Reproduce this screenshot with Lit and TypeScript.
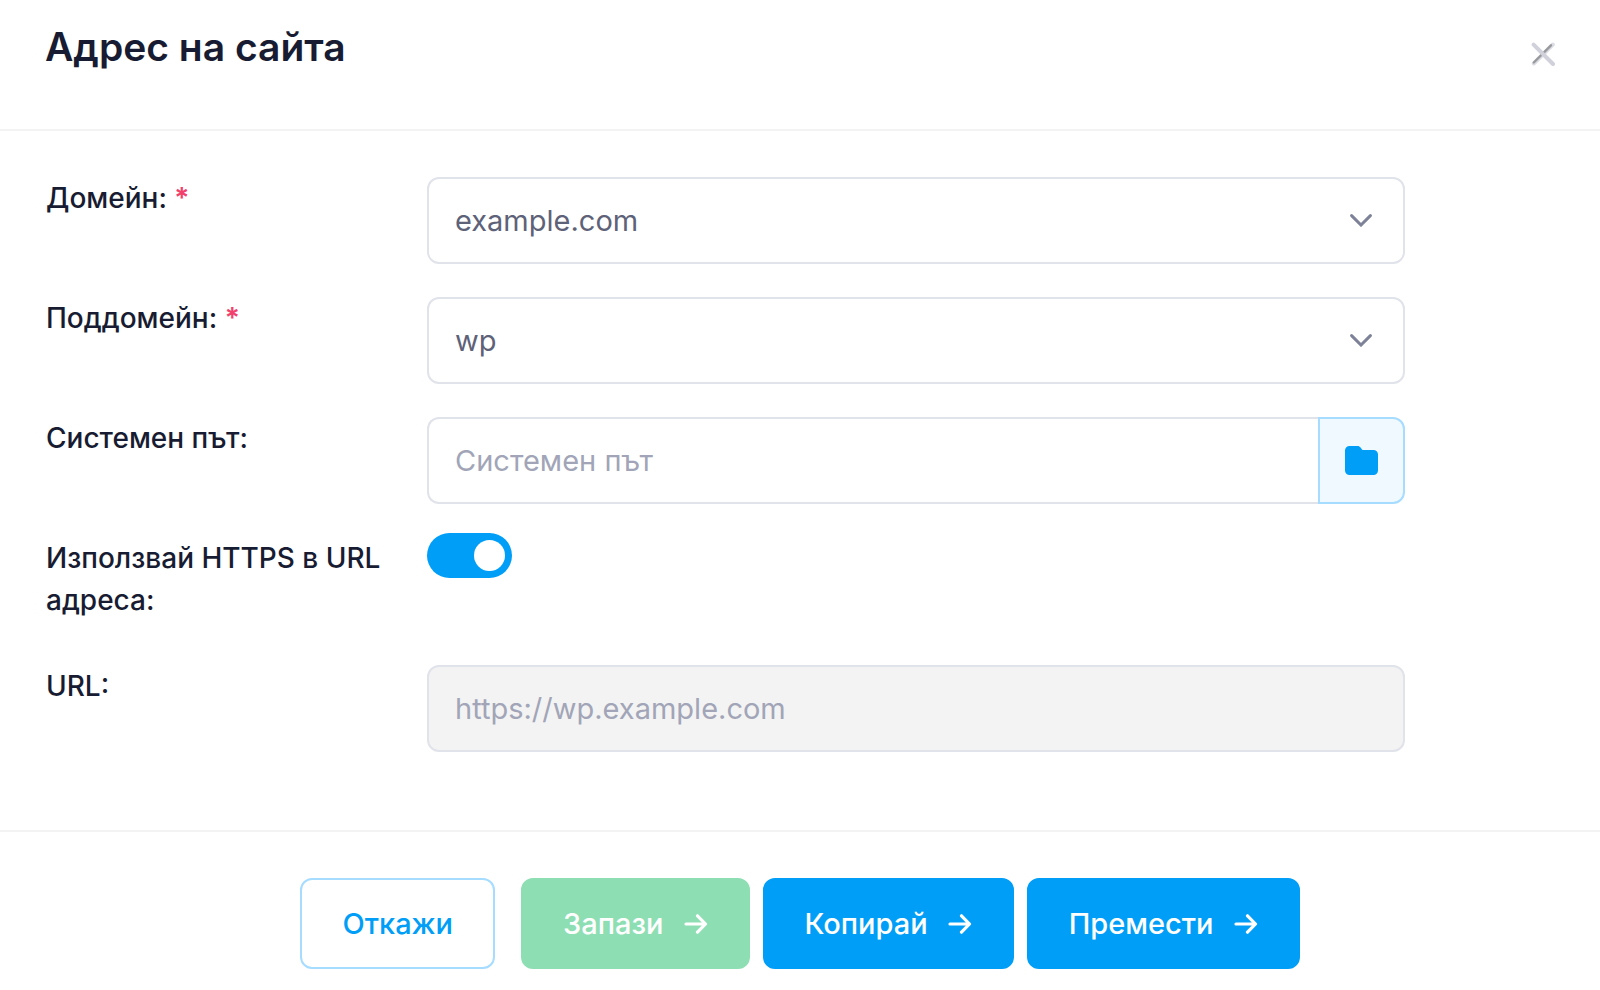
import { LitElement, css, html, svg } from "lit";
import { customElement, state } from "lit/decorators.js";

const chevron = html`<svg class="chevron" viewBox="0 0 22 13" width="22" height="13" aria-hidden="true">
  <path d="M1.6 1.6 11 11 20.4 1.6" fill="none" stroke="currentColor" stroke-width="3" stroke-linecap="round" />
</svg>`;

const arrow = html`<svg class="arrow" viewBox="0 0 24 20" width="24" height="20" aria-hidden="true">
  <path
    d="M2 10H21M13.5 1.8 21.5 10 13.5 18.2"
    fill="none"
    stroke="currentColor"
    stroke-width="3.2"
    stroke-linecap="round"
    stroke-linejoin="round"
  />
</svg>`;

const folder = html`<svg viewBox="0 0 33 29" width="33" height="29" aria-hidden="true">
  <path
    d="M4.5 0H12.5C14 0 14.8 .5 15.6 1.6L17 3.4C17.4 3.9 17.8 4 18.4 4H28.5A4.5 4.5 0 0 1 33 8.5V24.5A4.5 4.5 0 0 1 28.5 29H4.5A4.5 4.5 0 0 1 0 24.5V4.5A4.5 4.5 0 0 1 4.5 0Z"
    fill="currentColor"
  />
</svg>`;

const cross = html`<svg viewBox="0 0 24 24" width="24" height="24" aria-hidden="true">
  ${svg`<path d="M2.8 21.5 21.8 2.5" stroke="#dcdde4" stroke-width="4" stroke-linecap="round" />
  <path d="M2.8 20.5 20 3.3" stroke="#98999d" stroke-width="2.4" stroke-linecap="round" />
  <path d="M2.6 2.6 22 22" stroke="#d0d1da" stroke-width="4" stroke-linecap="round" />`}
</svg>`;

@customElement("app-root")
export class AppRoot extends LitElement {
  static styles = css`
    :host {
      display: block;
      min-height: 100vh;
      background: #fff;
      color: #181c32;
      font-family: Inter, sans-serif;
      font-size: 28px;
      font-weight: 500;
      line-height: 42px;
    }
    *,
    *::before {
      box-sizing: border-box;
    }
    button,
    input,
    select {
      margin: 0;
      font: inherit;
    }
    button {
      cursor: pointer;
    }
    .header {
      display: flex;
      justify-content: space-between;
      align-items: flex-start;
      height: 131px;
      padding: 18px 45px 0;
      border-bottom: 2px solid #f3f3f3;
    }
    .title {
      margin: 0;
      font-size: 39px;
      font-weight: 600;
      line-height: 58px;
    }
    .close {
      display: flex;
      margin-top: 24px;
      padding: 0;
      border: 0;
      background: none;
    }
    .body {
      display: grid;
      gap: 33px;
      padding: 46px 68px 78px 46px;
    }
    .row {
      display: grid;
      grid-template-columns: repeat(12, minmax(0, 1fr));
      column-gap: 38px;
      align-items: start;
    }
    .label {
      grid-column: span 3;
      padding-bottom: 11px;
    }
    .required {
      color: #f1416c;
      font-weight: 600;
    }
    .control {
      grid-column: span 8;
      display: flex;
      position: relative;
    }
    .field {
      flex: 1;
      min-width: 0;
      height: 87px;
      padding: 0 26px;
      border: 2px solid #e1e3ea;
      border-radius: 12px;
      background: #fff;
      color: #5e6278;
      font-size: 29px;
      font-weight: 400;
      appearance: none;
      outline: none;
    }
    .field::placeholder {
      color: #a1a5b7;
      opacity: 1;
    }
    .field:disabled {
      background: #f3f3f3;
      color: #a1a5b7;
      opacity: 1;
    }
    .chevron {
      position: absolute;
      right: 33px;
      top: 37px;
      color: #7e8299;
      pointer-events: none;
    }
    .field.joined {
      border-right: 0;
      border-radius: 12px 0 0 12px;
    }
    .browse {
      display: flex;
      align-items: center;
      justify-content: center;
      width: 87px;
      padding: 0;
      border: 2px solid #a6dcff;
      border-radius: 0 12px 12px 0;
      background: #f0f9ff;
      color: #009ef7;
    }
    .switch-line {
      align-items: center;
      height: 37px;
    }
    .switch {
      flex: none;
      display: flex;
      width: 85px;
      height: 45px;
      padding: 7px;
      border-radius: 23px;
      background: #e1e3ea;
      appearance: none;
      cursor: pointer;
    }
    .switch::before {
      content: "";
      width: 31px;
      height: 31px;
      border-radius: 50%;
      background: #fff;
    }
    .switch:checked {
      justify-content: flex-end;
      background: #009ef7;
    }
    .footer {
      display: flex;
      justify-content: center;
      gap: 13px;
      padding: 46px 45px 20px;
      border-top: 2px solid #f3f3f3;
    }
    .btn {
      display: flex;
      align-items: center;
      gap: 20px;
      height: 91px;
      padding: 0 40px;
      border: 2px solid #009ef7;
      border-radius: 12px;
      background: #009ef7;
      color: #fff;
      font-size: 29px;
    }
    .btn.cancel {
      margin-right: 13px;
      border-color: #a6dcff;
      background: #fff;
      color: #009ef7;
    }
    .btn.save {
      border-color: #8edeb3;
      background: #8edeb3;
    }
  `;

  @state() private https = true;

  render() {
    return html`
      <header class="header">
        <h1 class="title">Адрес на сайта</h1>
        <button class="close" type="button" aria-label="Затвори">${cross}</button>
      </header>
      <main class="body">
        <div class="row">
          <label class="label" for="domain">Домейн: <span class="required">*</span></label>
          <div class="control">
            <select class="field" id="domain" required>
              <option>example.com</option>
            </select>
            ${chevron}
          </div>
        </div>
        <div class="row">
          <label class="label" for="subdomain">Поддомейн: <span class="required">*</span></label>
          <div class="control">
            <select class="field" id="subdomain" required>
              <option>wp</option>
            </select>
            ${chevron}
          </div>
        </div>
        <div class="row">
          <label class="label" for="path">Системен път:</label>
          <div class="control">
            <input class="field joined" id="path" type="text" placeholder="Системен път" />
            <button class="browse" type="button" aria-label="Избор на папка">${folder}</button>
          </div>
        </div>
        <div class="row">
          <label class="label" for="https">Използвай HTTPS в URL адреса:</label>
          <div class="control switch-line">
            <input
              class="switch"
              id="https"
              type="checkbox"
              role="switch"
              .checked=${this.https}
              @change=${(e: Event) => (this.https = (e.target as HTMLInputElement).checked)}
            />
          </div>
        </div>
        <div class="row">
          <label class="label" for="url">URL:</label>
          <div class="control">
            <input
              class="field"
              id="url"
              type="text"
              disabled
              .value=${`${this.https ? "https" : "http"}://wp.example.com`}
            />
          </div>
        </div>
      </main>
      <footer class="footer">
        <button class="btn cancel" type="button">Откажи</button>
        <button class="btn save" type="button" disabled>Запази ${arrow}</button>
        <button class="btn" type="button">Копирай ${arrow}</button>
        <button class="btn" type="button">Премести ${arrow}</button>
      </footer>
    `;
  }
}
